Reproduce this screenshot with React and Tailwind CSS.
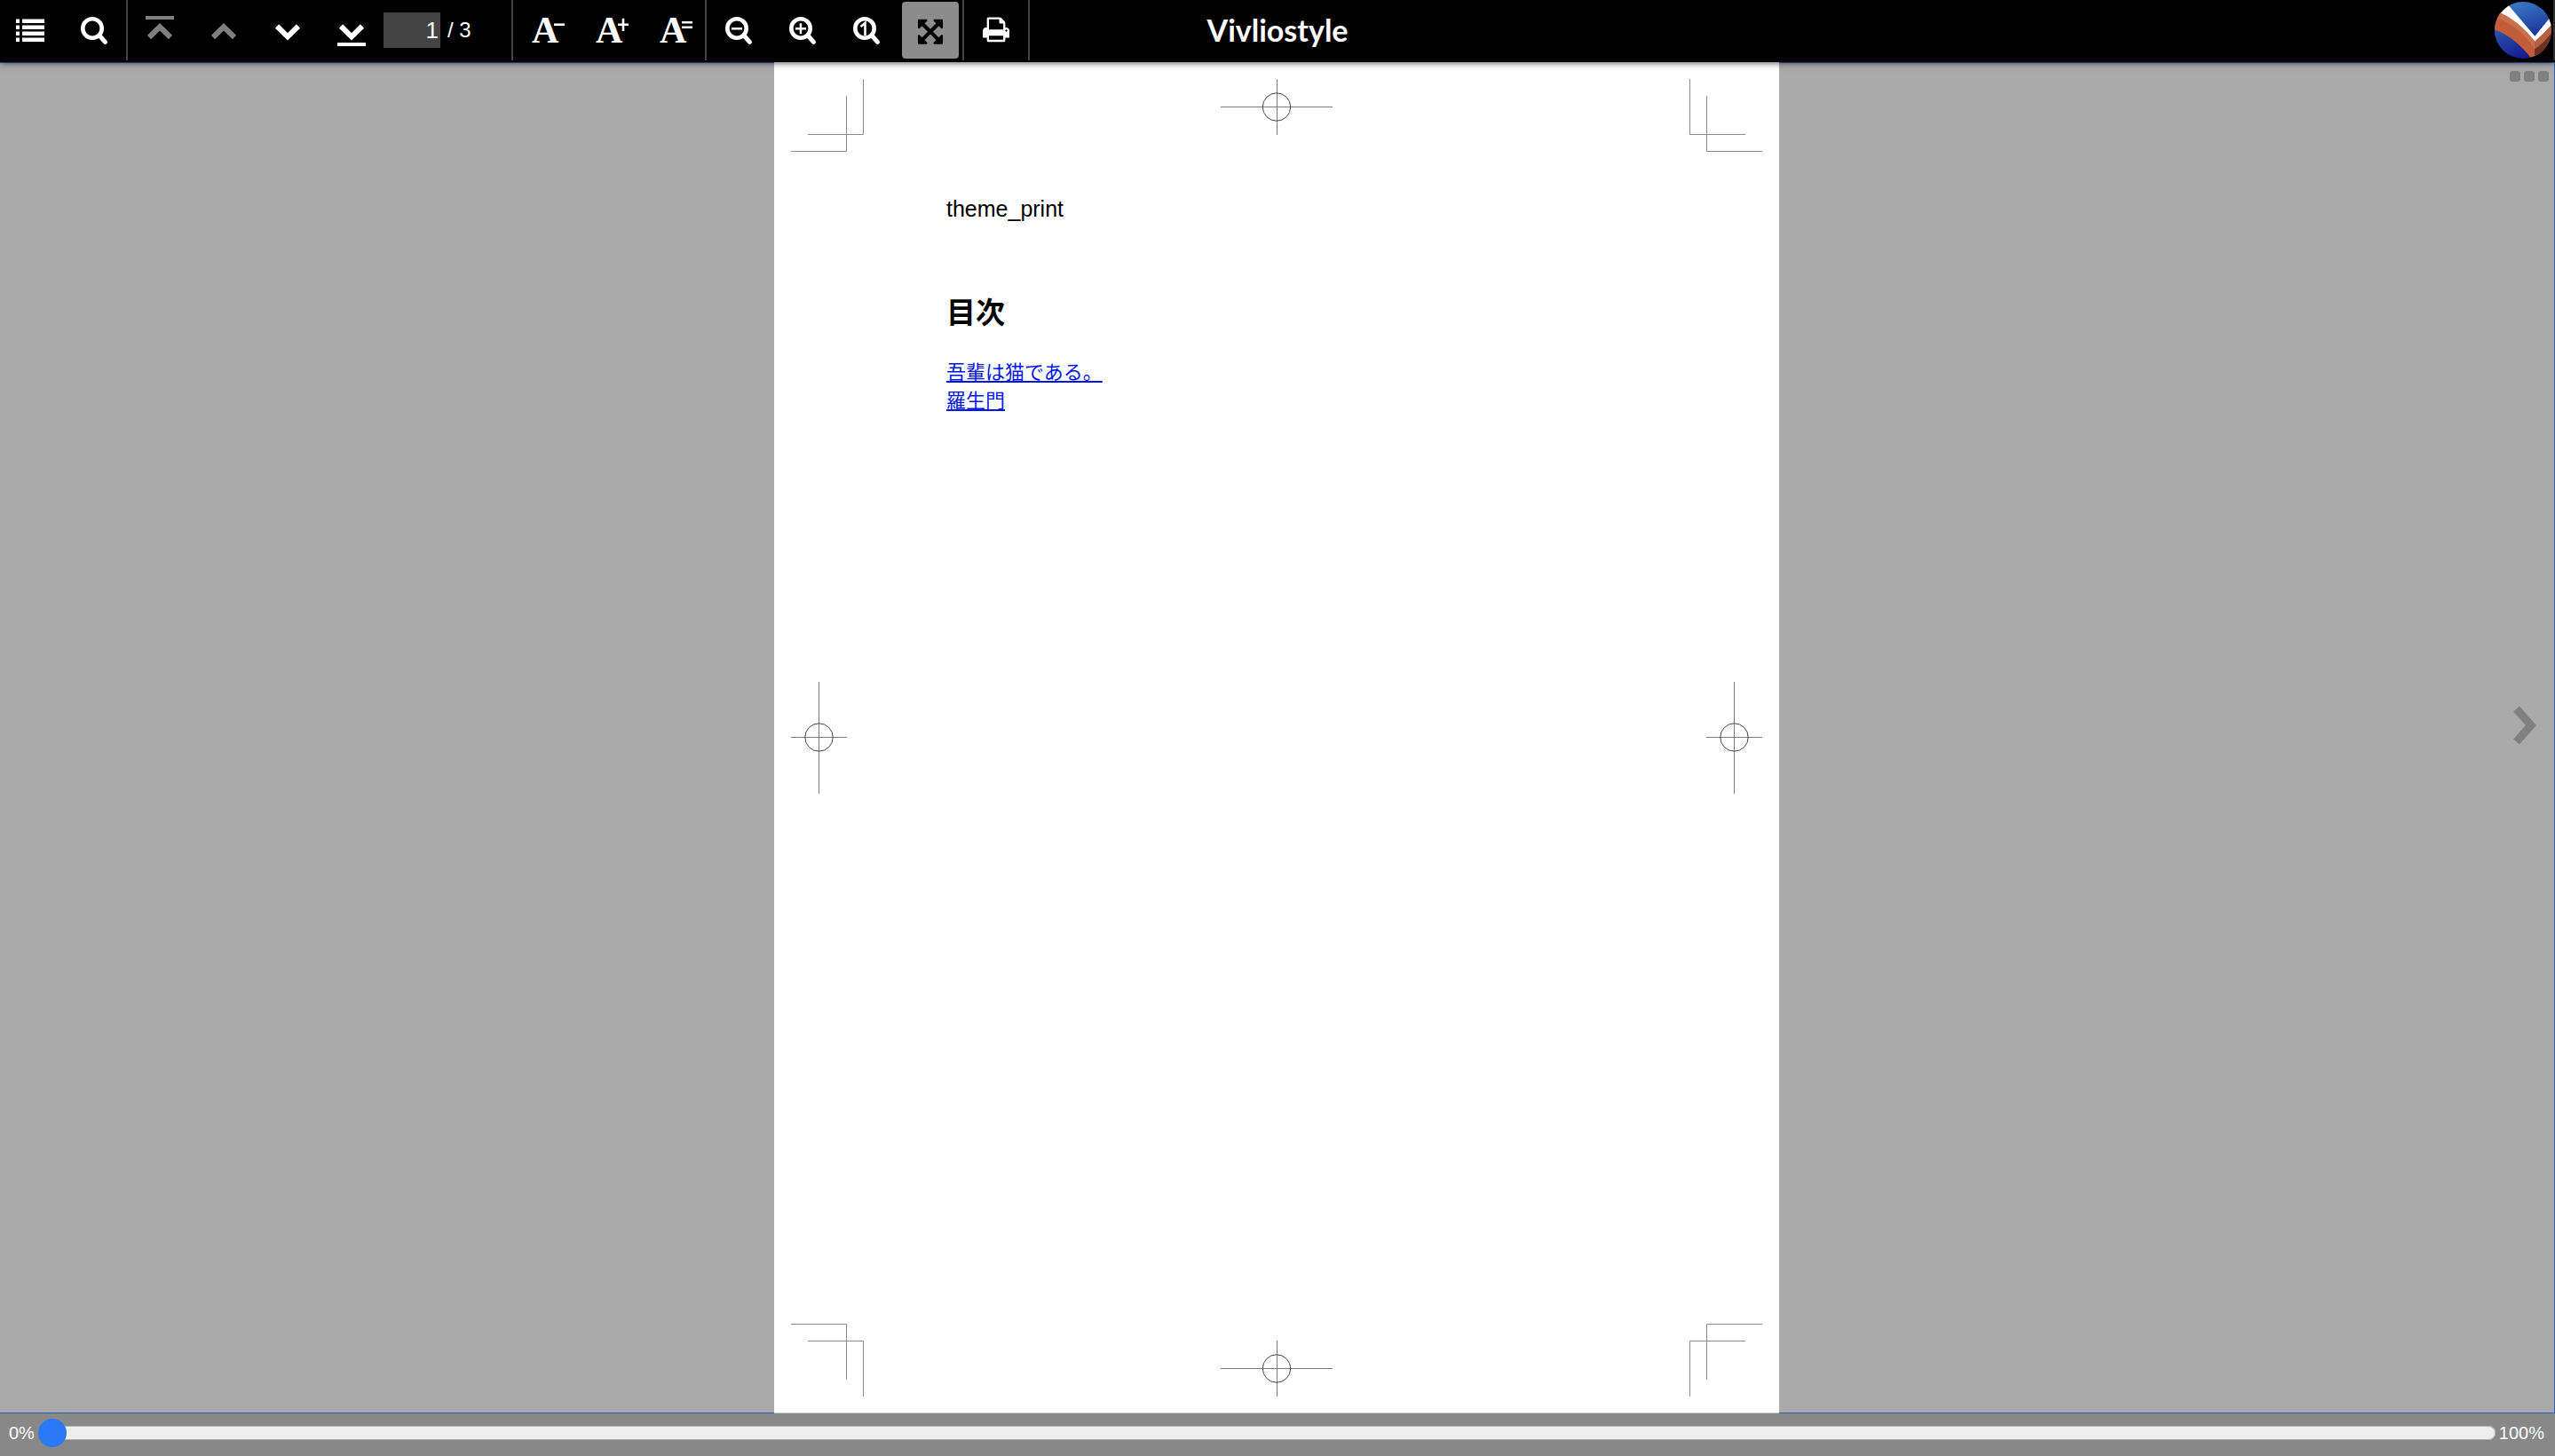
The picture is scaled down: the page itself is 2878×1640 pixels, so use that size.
import React from "react";

const ARROWS =
  "M1411 541l-355 355 355 355 144-144q29-31 70-14 39 17 39 59v448q0 26-19 45t-45 19h-448q-42 0-59-40-17-39 14-69l144-144-355-355-355 355 144 144q31 30 14 69-17 40-59 40h-448q-26 0-45-19t-19-45v-448q0-42 40-59 39-17 69 14l144 144 355-355-355-355-144 144q-19 19-45 19-12 0-24-5-40-17-40-59v-448q0-26 19-45t45-19h448q42 0 59 40 17 39-14 69l-144 144 355 355 355-355-144-144q-31-30-14-69 17-40 59-40h448q26 0 45 19t19 45v448q0 42-39 59-13 5-25 5-26 0-45-19z";
const PRINT =
  "M448 1536h896v-256h-896v256zm0-640h896v-384h-160q-40 0-68-28t-28-68v-160h-640v640zm1152 64q0-26-19-45t-45-19-45 19-19 45 19 45 45 19 45-19 19-45zm128 0v416q0 13-9.5 22.5t-22.5 9.5h-224v160q0 40-28 68t-68 28h-960q-40 0-68-28t-28-68v-160h-224q-13 0-22.5-9.5t-9.5-22.5v-416q0-79 56.5-135.5t135.5-56.5h64v-544q0-40 28-68t68-28h672q40 0 88 20t76 48l152 152q28 28 48 76t20 88v256h64q79 0 135.5 56.5t56.5 135.5z";

function IconButton({ label, disabled, active, children }) {
  return (
    <button
      type="button"
      aria-label={label}
      disabled={disabled}
      aria-pressed={active}
      className={
        active
          ? "size-16 shrink-0 rounded bg-[#8c8c8c] text-black"
          : "size-16 shrink-0 rounded text-white disabled:text-[#808080]"
      }
    >
      <svg viewBox="0 0 64 64" className="size-16" fill="currentColor" aria-hidden="true">
        {children}
      </svg>
    </button>
  );
}

function Group({ children }) {
  return <div className="flex h-[68px] items-end gap-2 border-r-2 border-[#444] px-1 pb-0.5">{children}</div>;
}

const Up = () => <path d="M20 40L32 28.3L44 40" fill="none" stroke="currentColor" strokeWidth="6" />;
const Down = () => <path d="M20 27.5L32 39.3L44 27.5" fill="none" stroke="currentColor" strokeWidth="6" />;

function Lens() {
  return (
    <g fill="none" stroke="currentColor">
      <circle cx="30" cy="30" r="10.7" strokeWidth="4.6" />
      <path d="M38 38L44.5 45.3" strokeWidth="5" strokeLinecap="round" />
    </g>
  );
}

function LetterA({ mark }) {
  return (
    <>
      <text x="17" y="45.5" fontSize="42" className="font-['Liberation_Serif',serif] font-bold">
        A
      </text>
      <path d={mark} fill="none" stroke="currentColor" strokeWidth="2.6" />
    </>
  );
}

function Corner({ className }) {
  return (
    <svg viewBox="0 0 82 82" className={className} fill="none" stroke="#8c8c8c" aria-hidden="true">
      <path d="M62.5 19V81.5H0M81.5 0V62.5H19" />
    </svg>
  );
}

function CrossWide() {
  return (
    <svg viewBox="0 0 126 63" className="h-[63px] w-[126px]" fill="none" stroke="#7c7c7c" aria-hidden="true">
      <path d="M0 31.5H126M63.5 0V63" />
      <circle cx="63" cy="31.5" r="15.7" stroke="#444" />
    </svg>
  );
}

function CrossTall() {
  return (
    <svg viewBox="0 0 63 126" className="h-[126px] w-[63px]" fill="none" stroke="#7c7c7c" aria-hidden="true">
      <path d="M0 62.5H63M31.5 0V126" />
      <circle cx="31.5" cy="62.5" r="15.7" stroke="#444" />
    </svg>
  );
}

function Logo() {
  return (
    <svg viewBox="0 0 64 64" className="size-16" aria-hidden="true">
      <defs>
        <clipPath id="disc">
          <circle cx="32" cy="32" r="32" />
        </clipPath>
        <linearGradient id="top" x1="0.2" y1="0" x2="0.7" y2="1">
          <stop offset="0" stopColor="#3a80c4" />
          <stop offset="1" stopColor="#1c2f9f" />
        </linearGradient>
        <linearGradient id="low" x1="0" y1="0" x2="0.6" y2="1">
          <stop offset="0" stopColor="#2c5cb4" />
          <stop offset="1" stopColor="#141a8c" />
        </linearGradient>
      </defs>
      <g clipPath="url(#disc)">
        <path d="M0 0H64V42H0Z" fill="url(#top)" />
        <path d="M0 28H50V64H0Z" fill="url(#low)" />
        <path d="M0 8L8 12Q28 22 45.3 43V64H41.5Q22 39 0 31.5Z" fill="#c25c3a" />
        <path d="M4 12L8 12Q28 22 45.3 43V53Q26 26 2 18Z" fill="#c96f4b" />
        <path d="M45 43L64 24V64H45Z" fill="#b5603f" />
        <path d="M45 53.5Q56 46 64 35V64H45Z" fill="#6f3125" />
        <path d="M15.7 4L45.3 38.7L61.5 19L64 26Q55 36 45.3 44.5Q28 22 7 12.500Z" fill="#fff" />
      </g>
    </svg>
  );
}

export default function App() {
  return (
    <div className="flex h-screen flex-col overflow-hidden bg-[#aaa] font-['Liberation_Sans',sans-serif]">
      <header className="relative z-10 flex h-[70px] shrink-0 items-start justify-between bg-black text-white shadow-[0_0_8px_rgba(0,0,0,0.8)]">
        <nav className="flex flex-1 items-start" aria-label="Viewer controls">
          <div className="flex h-[68px] items-end gap-2 border-r-2 border-[#444] pr-1 pb-0.5 pl-0.5">
            <IconButton label="Table of contents">
              <path d="M16 19.5h4v4.500h-4zM16 26.500h4v4.500h-4zM16 33.500h4v4.500h-4zM16 40.500h4v4.500h-4zM23 19.500h25v4.500h-25zM23 26.500h25v4.500h-25zM23 33.500h25v4.500h-25zM23 40.500h25v4.500h-25z" />
            </IconButton>
            <IconButton label="Find">
              <Lens />
            </IconButton>
          </div>
          <div className="flex h-[68px] w-[434px] items-end gap-2 border-r-2 border-[#444] pb-0.5 pl-1">
            <IconButton label="First page" disabled>
              <path d="M16 16h32v4h-32z" />
              <Up />
            </IconButton>
            <IconButton label="Previous page" disabled>
              <Up />
            </IconButton>
            <IconButton label="Next page">
              <Down />
            </IconButton>
            <IconButton label="Last page">
              <path d="M16 46h32v4h-32z" />
              <Down />
            </IconButton>
            <div className="-ml-1 flex h-16 items-center gap-2 text-2xl">
              <input
                aria-label="Page number"
                defaultValue="1"
                className="h-10 w-16 bg-[#444] pr-0.5 text-right text-[26px] text-white"
              />
              <span>/ 3</span>
            </div>
          </div>
          <Group>
            <IconButton label="Smaller text">
              <LetterA mark="M42 25.700H54" />
            </IconButton>
            <IconButton label="Larger text">
              <LetterA mark="M42 25.700H54M48 18.700V33" />
            </IconButton>
            <IconButton label="Default text size">
              <LetterA mark="M42 23.300H54M42 28.700H54" />
            </IconButton>
          </Group>
          <Group>
            <IconButton label="Zoom out">
              <Lens />
              <path d="M24 29h12v2.500h-12z" />
            </IconButton>
            <IconButton label="Zoom in">
              <Lens />
              <path d="M24 29h12v2.500h-12zM28.700 24.300h2.500v12h-2.500z" />
            </IconButton>
            <IconButton label="Actual size">
              <Lens />
              <path d="M25.500 28L30.500 24V38" fill="none" stroke="currentColor" strokeWidth="2.600" />
            </IconButton>
            <IconButton label="Fit to screen" active>
              <path transform="translate(15.600 17.300) scale(0.0183)" d={ARROWS} />
            </IconButton>
          </Group>
          <Group>
            <IconButton label="Print">
              <path transform="translate(15.900 15.200) scale(0.018)" d={PRINT} />
            </IconButton>
          </Group>
        </nav>
        <h1 className="pt-2.5 font-[Lato,sans-serif] text-[34px] leading-[48px] font-bold">Vivliostyle</h1>
        <div className="flex flex-1 justify-end">
          <a
            href="#about"
            aria-label="About Vivliostyle"
            className="flex h-[68px] items-end border-r-2 border-[#333] pr-0.5 pb-0.5"
          >
            <Logo />
          </a>
        </div>
      </header>

      <main className="relative flex min-h-0 flex-1 justify-center border-t border-r border-b border-[#2660b8]">
        <article
          lang="ja"
          className="-my-px mr-px grid aspect-[1132/1522] grid-cols-[auto_1fr_auto] grid-rows-[auto_1fr_auto] border-b border-[#bcd0de] bg-white p-[19px] pb-[18px] font-['Liberation_Sans','Noto_Sans_CJK_JP',sans-serif] text-black"
        >
          <Corner className="size-[82px]" />
          <div className="justify-self-center">
            <CrossWide />
          </div>
          <Corner className="size-[82px] -scale-x-100" />
          <div className="self-center">
            <CrossTall />
          </div>
          <div className="pt-[46px] pl-[93px]">
            <p className="text-[25px] leading-9">theme_print</p>
            <div className="font-['Noto_Sans_CJK_JP',sans-serif]">
              <h2 className="mt-[72px] text-[33px] leading-[50px] font-bold">目次</h2>
              <ul className="mt-[26px] text-[22px] leading-8 text-[#0018e6]">
                <li>
                  <a href="#cat" className="underline">
                    吾輩は猫である。
                  </a>
                </li>
                <li>
                  <a href="#rashomon" className="underline">
                    羅生門
                  </a>
                </li>
              </ul>
            </div>
          </div>
          <div className="self-center justify-self-end">
            <CrossTall />
          </div>
          <Corner className="size-[82px] -scale-y-100" />
          <div className="self-end justify-self-center">
            <CrossWide />
          </div>
          <Corner className="size-[82px] -scale-100" />
        </article>
        <button type="button" aria-label="Menu" className="absolute top-[9px] right-1.5 flex gap-1">
          <span className="size-3 rounded-[3px] bg-[#808080]" />
          <span className="size-3 rounded-[3px] bg-[#808080]" />
          <span className="size-3 rounded-[3px] bg-[#808080]" />
        </button>
        <button type="button" aria-label="Next page" className="absolute inset-y-0 right-5 flex items-center pb-7">
          <svg viewBox="0 0 26 44" className="h-11 w-[26px]" fill="none" stroke="#808080" strokeWidth="9" aria-hidden="true">
            <path d="M3.500 3.500L20 22L3.500 40.500" />
          </svg>
        </button>
      </main>

      <footer className="flex h-12 shrink-0 items-center gap-1 bg-[#888] pr-3 pb-1 pl-2.5 text-xl text-white">
        <span>0%</span>
        <input
          type="range"
          min="0"
          max="100"
          defaultValue="0"
          aria-label="Reading position"
          className="h-8 min-w-0 flex-1 appearance-none bg-transparent [&::-webkit-slider-runnable-track]:h-4 [&::-webkit-slider-runnable-track]:rounded-full [&::-webkit-slider-runnable-track]:bg-[#eee] [&::-webkit-slider-runnable-track]:shadow-[inset_0_0_0_1px_#b2b2b2] [&::-webkit-slider-thumb]:-mt-2 [&::-webkit-slider-thumb]:size-8 [&::-webkit-slider-thumb]:appearance-none [&::-webkit-slider-thumb]:rounded-full [&::-webkit-slider-thumb]:bg-[#2b79f8]"
        />
        <span>100%</span>
      </footer>
    </div>
  );
}
